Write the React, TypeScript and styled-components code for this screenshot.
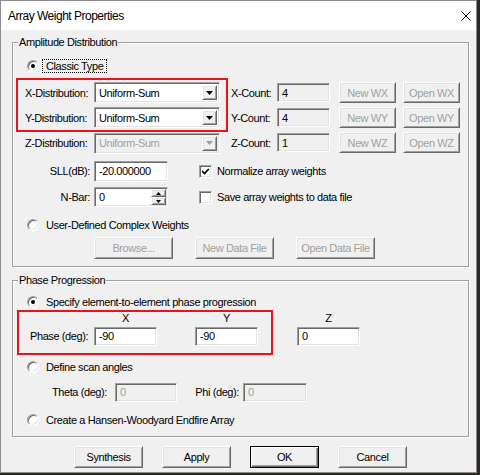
import React from "react";
import styled, { createGlobalStyle, css } from "styled-components";

const GlobalStyle = createGlobalStyle`
  html, body {
    margin: 0;
    padding: 0;
    background: #2b2722;
  }
  body {
    font-family: "Liberation Sans", Arial, sans-serif;
    font-size: 11px;
    letter-spacing: -0.4px;
    color: #000;
  }
`;

const sunken = css`
  box-sizing: border-box;
  border: 1px solid;
  border-color: #a0a0a0 #ffffff #ffffff #a0a0a0;
  box-shadow: inset 1px 1px 0 #696969, inset -1px -1px 0 #e3e3e3;
`;

const raised = css`
  box-sizing: border-box;
  border: 1px solid;
  border-color: #ffffff #696969 #696969 #ffffff;
  box-shadow: inset 1px 1px 0 #e3e3e3, inset -1px -1px 0 #a0a0a0;
`;

const Window = styled.div`
  width: 477px;
  height: 473px;
  box-sizing: border-box;
  border: 1px solid #8c8c8c;
  background: #f0f0f0;
  display: flex;
  flex-direction: column;
`;

const TitleBar = styled.div`
  height: 29px;
  flex-shrink: 0;
  background: #fff;
  display: flex;
  align-items: center;
  justify-content: space-between;
  padding: 0 5px 0 7px;
  font-size: 12px;
  letter-spacing: -0.5px;
`;

const Body = styled.div`
  padding: 12px 8px 0 11px;
`;

const Group = styled.div<{ $h: number; $mt?: number }>`
  position: relative;
  box-sizing: border-box;
  width: 457px;
  height: ${(p) => p.$h}px;
  margin-top: ${(p) => p.$mt ?? 0}px;
  padding-top: 13px;
  border: 1px solid #a0a0a0;
  box-shadow: inset 1px 1px 0 #fff, 1px 1px 0 #fff;
`;

const Caption = styled.span`
  position: absolute;
  top: -7px;
  left: 5px;
  padding: 0 1px;
  line-height: 13px;
  background: #f0f0f0;
`;

const Line = styled.div<{ $h: number; $mt?: number; $pl?: number }>`
  display: flex;
  align-items: center;
  flex-shrink: 0;
  height: ${(p) => p.$h}px;
  margin-top: ${(p) => p.$mt ?? 0}px;
  padding-left: ${(p) => p.$pl ?? 0}px;
`;

const RadioCircle = styled.span<{ $checked?: boolean }>`
  ${sunken}
  width: 12px;
  height: 12px;
  border-radius: 50%;
  background: #fff;
  display: flex;
  align-items: center;
  justify-content: center;
  flex-shrink: 0;
  &::after {
    content: "";
    width: 4px;
    height: 4px;
    border-radius: 50%;
    background: ${(p) => (p.$checked ? "#000" : "transparent")};
  }
`;

const RadioText = styled.span<{ $focused?: boolean }>`
  margin-left: 3px;
  padding: 0 3px;
  line-height: 12px;
  border: 1px dotted ${(p) => (p.$focused ? "#000" : "transparent")};
`;

const CheckBox = styled.span`
  ${sunken}
  width: 13px;
  height: 13px;
  background: #fff;
  display: flex;
  align-items: center;
  justify-content: center;
  flex-shrink: 0;
`;

const CheckText = styled.span`
  margin-left: 5px;
`;

const RedBox = styled.div<{ $w: number }>`
  box-sizing: border-box;
  width: ${(p) => p.$w}px;
  border: 2px solid #e8141c;
`;

const DistBlock = styled.div`
  display: flex;
  margin: 2px 0 0 3px;
`;

const LeftCol = styled.div`
  width: 212px;
  display: flex;
  flex-direction: column;
`;

const CountCol = styled.div`
  display: flex;
  flex-direction: column;
  padding-top: 2px;
  margin-left: 3px;
`;

const DistLabel = styled.span`
  box-sizing: border-box;
  width: 76px;
  padding-left: 7px;
`;

const FieldLabel = styled.span<{ $w: number; $mr: number }>`
  width: ${(p) => p.$w}px;
  margin-right: ${(p) => p.$mr}px;
  text-align: right;
  flex-shrink: 0;
`;

const CountLabel = styled.span`
  width: 46px;
`;

const SelectBox = styled.div<{ $disabled?: boolean }>`
  ${sunken}
  width: 126px;
  height: 21px;
  padding: 2px;
  display: flex;
  background: ${(p) => (p.$disabled ? "#f0f0f0" : "#fff")};
  color: ${(p) => (p.$disabled ? "#a0a0a0" : "#000")};
`;

const SelectText = styled.span`
  flex: 1;
  display: flex;
  align-items: center;
  padding-left: 2px;
`;

const DropBtn = styled.span`
  ${raised}
  width: 15px;
  background: #f0f0f0;
  display: flex;
  align-items: center;
  justify-content: center;
`;

const Edit = styled.div<{ $w: number; $h: number; $bg?: string; $muted?: boolean }>`
  ${sunken}
  width: ${(p) => p.$w}px;
  height: ${(p) => p.$h}px;
  padding: 0 0 0 4px;
  display: flex;
  align-items: center;
  flex-shrink: 0;
  background: ${(p) => p.$bg ?? "#fff"};
  color: ${(p) => (p.$muted ? "#a0a0a0" : "#000")};
`;

const EditText = styled.span`
  flex: 1;
`;

const SpinCol = styled.span`
  display: flex;
  flex-direction: column;
  align-self: stretch;
  width: 15px;
  margin: 1px;
`;

const SpinBtn = styled.span`
  ${raised}
  flex: 1;
  background: #f0f0f0;
  display: flex;
  align-items: center;
  justify-content: center;
`;

const Btn = styled.button<{ $w: number; $h?: number; $ml?: number; $default?: boolean }>`
  ${raised}
  width: ${(p) => p.$w}px;
  height: ${(p) => p.$h ?? 22}px;
  margin-left: ${(p) => p.$ml ?? 0}px;
  padding: 0;
  background: #f0f0f0;
  font-family: inherit;
  font-size: 11px;
  letter-spacing: -0.4px;
  color: #000;
  flex-shrink: 0;
  &:disabled {
    color: #a0a0a0;
  }
  ${(p) =>
    p.$default &&
    css`
      border-color: #000;
      box-shadow: inset 1px 1px 0 #fff, inset -1px -1px 0 #696969,
        inset -2px -2px 0 #a0a0a0;
    `}
`;

const BrowseRow = styled.div`
  display: flex;
  align-items: center;
  gap: 22px;
  height: 22px;
  margin-top: 2px;
  padding-left: 81px;
`;

const PhaseBlock = styled.div`
  display: flex;
  align-items: flex-start;
  margin-left: 4px;
`;

const PhaseGrid = styled.div`
  display: flex;
  padding: 0 13px 7px 0;
`;

const PhaseCol = styled.div<{ $w: number; $ml?: number; $mt?: number }>`
  width: ${(p) => p.$w}px;
  margin-left: ${(p) => p.$ml ?? 0}px;
  margin-top: ${(p) => p.$mt ?? 0}px;
  display: flex;
  flex-direction: column;
`;

const ColHead = styled.div`
  height: 13px;
  line-height: 13px;
  text-align: center;
`;

const ButtonBar = styled.div`
  display: flex;
  gap: 19px;
  margin-top: 9px;
  padding-left: 62px;
`;

const CloseIcon = () => (
  <svg width="10" height="10" viewBox="0 0 10 10">
    <path d="M0.5 0.5 L9.5 9.5 M9.5 0.5 L0.5 9.5" stroke="#000" strokeWidth="1" />
  </svg>
);

const Arrow = ({ color }: { color: string }) => (
  <svg width="7" height="4" viewBox="0 0 7 4">
    <polygon points="0,0 7,0 3.5,4" fill={color} />
  </svg>
);

const SpinArrow = ({ up }: { up?: boolean }) => (
  <svg width="5" height="3" viewBox="0 0 5 3">
    <polygon points={up ? "0,3 5,3 2.5,0" : "0,0 5,0 2.5,3"} fill="#000" />
  </svg>
);

const Radio = ({
  checked,
  focused,
  children,
}: {
  checked?: boolean;
  focused?: boolean;
  children: React.ReactNode;
}) => (
  <>
    <RadioCircle $checked={checked} />
    <RadioText $focused={focused}>{children}</RadioText>
  </>
);

const Check = ({ checked, children }: { checked?: boolean; children: React.ReactNode }) => (
  <>
    <CheckBox>
      {checked && (
        <svg width="9" height="9" viewBox="0 0 9 9">
          <path d="M1.2 4.2 L3.5 6.5 L7.8 2" stroke="#000" strokeWidth="1.7" fill="none" />
        </svg>
      )}
    </CheckBox>
    <CheckText>{children}</CheckText>
  </>
);

const Select = ({ value, disabled }: { value: string; disabled?: boolean }) => (
  <SelectBox $disabled={disabled}>
    <SelectText>{value}</SelectText>
    <DropBtn>
      <Arrow color={disabled ? "#a0a0a0" : "#000"} />
    </DropBtn>
  </SelectBox>
);

const counts = [
  { axis: "X", value: "4" },
  { axis: "Y", value: "4" },
  { axis: "Z", value: "1" },
];

export default function App() {
  return (
    <>
      <GlobalStyle />
      <Window>
        <TitleBar>
          <span>Array Weight Properties</span>
          <CloseIcon />
        </TitleBar>
        <Body>
          <Group $h={225}>
            <Caption>Amplitude Distribution</Caption>
            <Line $h={20} $pl={14}>
              <Radio checked focused>
                Classic Type
              </Radio>
            </Line>
            <DistBlock>
              <LeftCol>
                <RedBox $w={212}>
                  <Line $h={25}>
                    <DistLabel>X-Distribution:</DistLabel>
                    <Select value="Uniform-Sum" />
                  </Line>
                  <Line $h={25}>
                    <DistLabel>Y-Distribution:</DistLabel>
                    <Select value="Uniform-Sum" />
                  </Line>
                </RedBox>
                <Line $h={22} $pl={2}>
                  <DistLabel>Z-Distribution:</DistLabel>
                  <Select value="Uniform-Sum" disabled />
                </Line>
              </LeftCol>
              <CountCol>
                {counts.map((c) => (
                  <Line $h={25} key={c.axis}>
                    <CountLabel>{c.axis}-Count:</CountLabel>
                    <Edit $w={53} $h={19} $bg="#f0f0f0">
                      {c.value}
                    </Edit>
                    <Btn $w={57} $h={21} $ml={9} disabled>
                      New W{c.axis}
                    </Btn>
                    <Btn $w={57} $h={21} $ml={7} disabled>
                      Open W{c.axis}
                    </Btn>
                  </Line>
                ))}
              </CountCol>
            </DistBlock>
            <Line $h={22} $mt={5}>
              <FieldLabel $w={77} $mr={4}>
                SLL(dB):
              </FieldLabel>
              <Edit $w={74} $h={21}>
                -20.000000
              </Edit>
              <Line $h={22} $pl={31}>
                <Check checked>Normalize array weights</Check>
              </Line>
            </Line>
            <Line $h={22} $mt={4}>
              <FieldLabel $w={77} $mr={4}>
                N-Bar:
              </FieldLabel>
              <Edit $w={74} $h={20}>
                <EditText>0</EditText>
                <SpinCol>
                  <SpinBtn>
                    <SpinArrow up />
                  </SpinBtn>
                  <SpinBtn>
                    <SpinArrow />
                  </SpinBtn>
                </SpinCol>
              </Edit>
              <Line $h={22} $pl={31}>
                <Check>Save array weights to data file</Check>
              </Line>
            </Line>
            <Line $h={20} $mt={7} $pl={14}>
              <Radio>User-Defined Complex Weights</Radio>
            </Line>
            <BrowseRow>
              <Btn $w={79} disabled>
                Browse...
              </Btn>
              <Btn $w={79} disabled>
                New Data File
              </Btn>
              <Btn $w={79} disabled>
                Open Data File
              </Btn>
            </BrowseRow>
          </Group>

          <Group $h={157} $mt={13}>
            <Caption>Phase Progression</Caption>
            <Line $h={16} $pl={14}>
              <Radio checked>Specify element-to-element phase progression</Radio>
            </Line>
            <PhaseBlock>
              <RedBox $w={256}>
                <PhaseGrid>
                  <PhaseCol $w={75}>
                    <ColHead />
                    <Line $h={20} $mt={1} $pl={11}>
                      Phase (deg):
                    </Line>
                  </PhaseCol>
                  <PhaseCol $w={63}>
                    <ColHead>X</ColHead>
                    <Line $h={20} $mt={1}>
                      <Edit $w={63} $h={19}>
                        -90
                      </Edit>
                    </Line>
                  </PhaseCol>
                  <PhaseCol $w={63} $ml={38}>
                    <ColHead>Y</ColHead>
                    <Line $h={20} $mt={1}>
                      <Edit $w={63} $h={19}>
                        -90
                      </Edit>
                    </Line>
                  </PhaseCol>
                </PhaseGrid>
              </RedBox>
              <PhaseCol $w={63} $ml={24} $mt={2}>
                <ColHead>Z</ColHead>
                <Line $h={20} $mt={1}>
                  <Edit $w={63} $h={19}>
                    0
                  </Edit>
                </Line>
              </PhaseCol>
            </PhaseBlock>
            <Line $h={20} $mt={2} $pl={14}>
              <Radio>Define scan angles</Radio>
            </Line>
            <Line $h={20} $mt={5}>
              <FieldLabel $w={94} $mr={8}>
                Theta (deg):
              </FieldLabel>
              <Edit $w={62} $h={19} $bg="#f0f0f0" $muted>
                0
              </Edit>
              <FieldLabel $w={62} $mr={4}>
                Phi (deg):
              </FieldLabel>
              <Edit $w={64} $h={19} $bg="#f0f0f0" $muted>
                0
              </Edit>
            </Line>
            <Line $h={20} $mt={8} $pl={14}>
              <Radio>Create a Hansen-Woodyard Endfire Array</Radio>
            </Line>
          </Group>

          <ButtonBar>
            <Btn $w={69}>Synthesis</Btn>
            <Btn $w={69}>Apply</Btn>
            <Btn $w={69} $default>
              OK
            </Btn>
            <Btn $w={69}>Cancel</Btn>
          </ButtonBar>
        </Body>
      </Window>
    </>
  );
}
